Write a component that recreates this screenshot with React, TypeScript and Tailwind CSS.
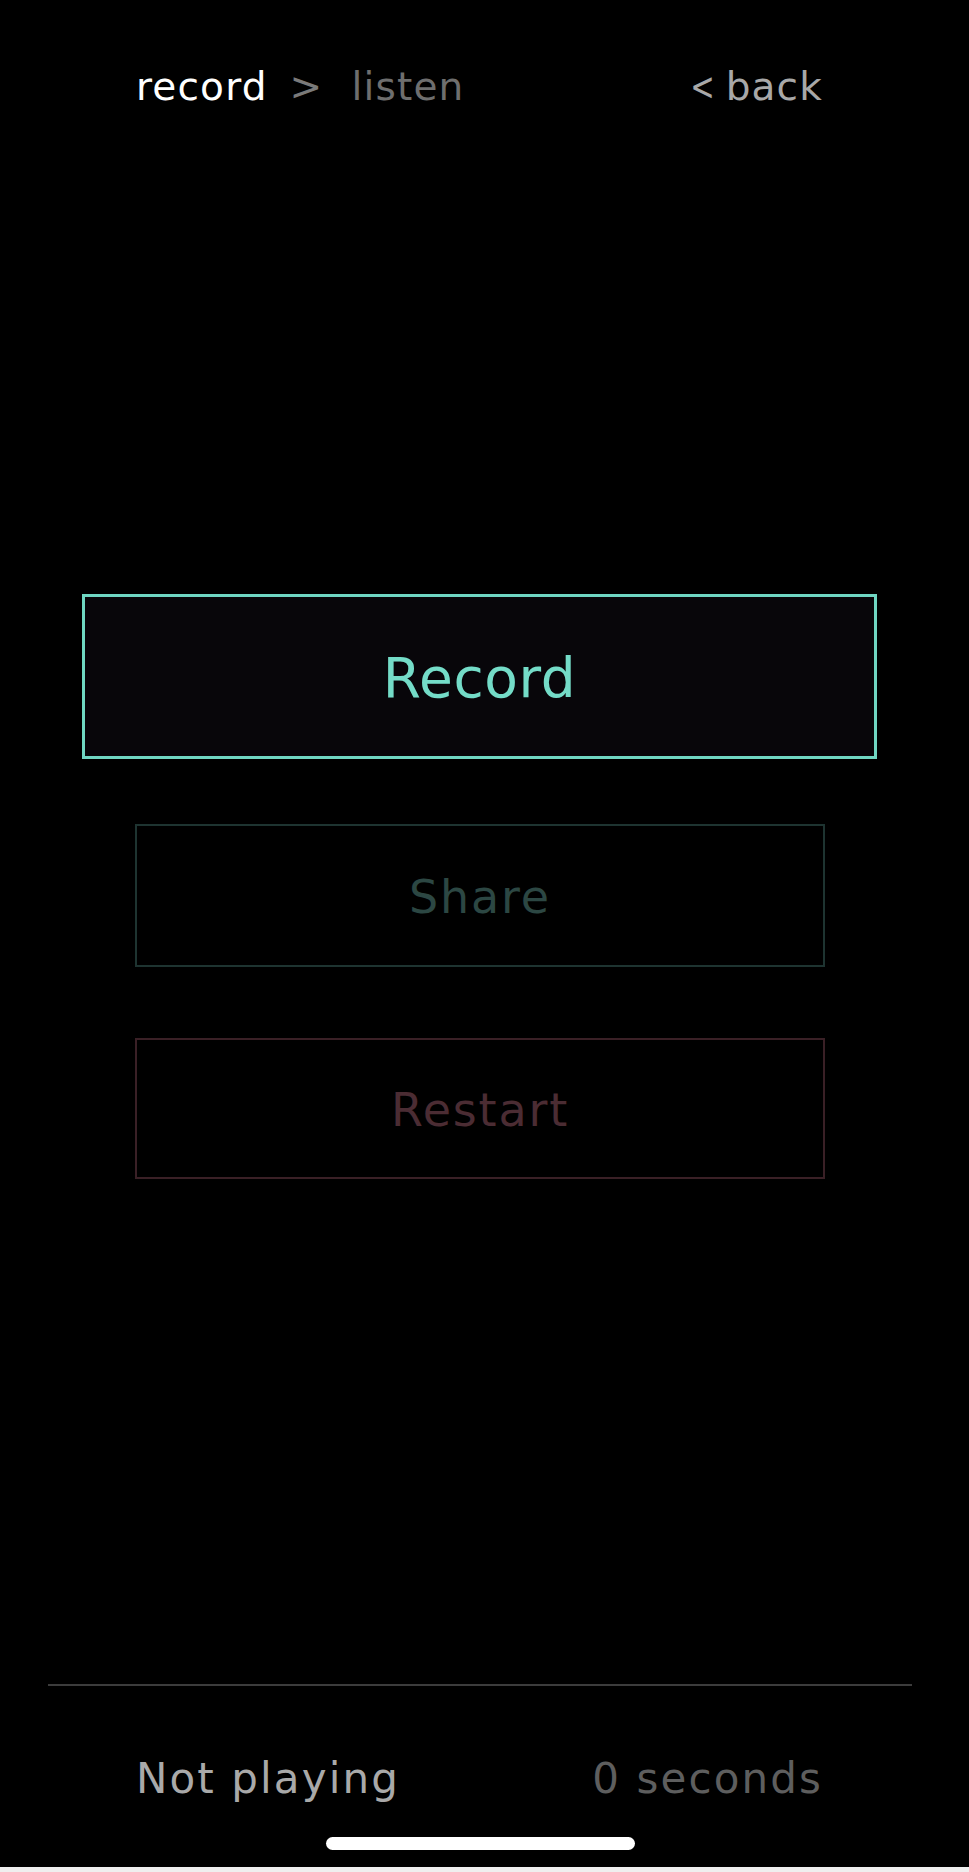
import React from "react";

const font = "font-['DejaVu_Sans',sans-serif]";

export default function App() {
  return (
    <div className={`w-[969px] h-[1872px] bg-black flex flex-col ${font}`}>
      <header className="pt-[67px] pl-[136px] pr-[146px] flex items-start justify-between text-[39px] leading-none tracking-[0.03em]">
        <div className="flex items-start">
          <span className="text-white">record</span>
          <span className="ml-[22px] text-[#7a7a7a]">&gt;</span>
          <span className="ml-[28px] text-[#6e6e6e]">listen</span>
        </div>
        <div className="flex items-start text-[#a8a8a8]">
          <span className="scale-x-75">&lt;</span>
          <span className="ml-[6px]">back</span>
        </div>
      </header>

      <main className="mt-[488px] flex flex-col">
        <button className="ml-[82px] w-[795px] h-[165px] border-[3px] border-[#6fd6c2] bg-[#08060a] flex items-center justify-center pt-[4px] text-[55px] leading-none text-[#74dcc8] tracking-[0.01em]">
          Record
        </button>
        <button className="mt-[65px] ml-[135px] w-[690px] h-[143px] border-2 border-[#1e3431] flex items-center justify-center pt-[3px] text-[46px] leading-none text-[#2c4743] tracking-[0.04em]">
          Share
        </button>
        <button className="mt-[71px] ml-[135px] w-[690px] h-[141px] border-2 border-[#3a2026] flex items-center justify-center pt-[3px] text-[46px] leading-none text-[#4b2c33] tracking-[0.04em]">
          Restart
        </button>
      </main>

      <div className="mt-[505px] ml-[48px] w-[864px] h-[2px] bg-[#3c3c3c]" />

      <footer className="mt-[72px] pl-[136px] pr-[146px] flex justify-between text-[42px] leading-none tracking-[0.05em]">
        <span className="text-[#a9a9a9]">Not playing</span>
        <span className="text-[#5e5e5e]">0 seconds</span>
      </footer>

      <div className="mt-[37px] ml-[326px] w-[309px] h-[13px] rounded-full bg-white" />
      <div className="mt-[17px] h-[5px] bg-[#efefef]" />
    </div>
  );
}
